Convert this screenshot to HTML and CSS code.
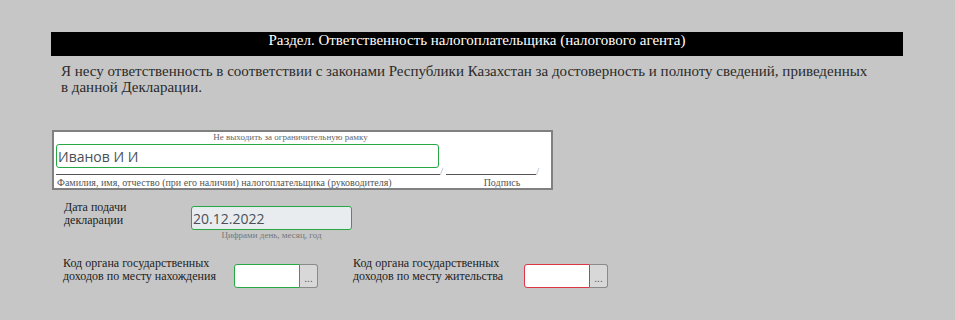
FILE: index.html
```html
<html>
<head>
  <title>Ответственность налогоплательщика</title>
  <link rel="stylesheet" href="styles.css">
</head>
<body>
  <div class="page">
    <div class="section-title">Раздел. Ответственность налогоплательщика (налогового агента)</div>
    <p class="statement">Я несу ответственность в соответствии с законами Республики Казахстан за достоверность и полноту сведений, приведенных в данной Декларации.</p>

    <div class="sign-box">
      <div class="frame-note">Не выходить за ограничительную рамку</div>
      <div class="fio-row">
        <div class="fio-cell"><input class="field ok fio" type="text" value="Иванов И И"></div>
        <span class="slash">/</span>
        <div class="sign-cell"></div>
        <span class="slash">/</span>
      </div>
      <div class="caption-row">
        <span class="fio-caption">Фамилия, имя, отчество (при его наличии) налогоплательщика (руководителя)</span>
        <span class="sign-caption">Подпись</span>
      </div>
    </div>

    <div class="date-row">
      <div class="label">Дата подачи<br>декларации</div>
      <div class="date-wrap">
        <input class="field ok date" type="text" value="20.12.2022" readonly>
        <div class="hint">Цифрами день, месяц, год</div>
      </div>
    </div>

    <div class="code-row">
      <div class="code-group">
        <div class="label">Код органа государственных<br>доходов по месту нахождения</div>
        <div class="picker">
          <input class="field ok code" type="text">
          <button class="dots">...</button>
        </div>
      </div>
      <div class="code-group">
        <div class="label">Код органа государственных<br>доходов по месту жительства</div>
        <div class="picker">
          <input class="field bad code" type="text">
          <button class="dots">...</button>
        </div>
      </div>
    </div>
  </div>
</body>
</html>
```

FILE: styles.css
```css
body { margin: 0; background: #c6c6c6; font-family: "Liberation Serif", "Tinos", "DejaVu Serif", serif; color: #222; }
.page { padding: 32px 0 0 51px; width: 852px; }
.section-title { background: #000; color: #fff; font-size: 15px; height: 24px; line-height: 17px;
  text-align: center; }
.statement { margin: 7px 0 0 10px; width: 810px; font-size: 15px; line-height: 16px; color: #2a2a2a; }

.sign-box { margin: 35px 0 0 1px; width: 495px; height: 56px; background: #fff; border: 2px solid #808080;
  padding: 0 0 0 2px; }
.frame-note { font-size: 9px; color: #666; text-align: center; line-height: 10px; margin-left: -26px; }
.fio-row { display: flex; align-items: flex-end; margin-top: 2px; }
.fio-cell { width: 384px; border-bottom: 1px solid #555; padding-bottom: 6px; }
.sign-cell { width: 90px; height: 30px; border-bottom: 1px solid #555; margin-left: 5px; }
.slash { font-size: 11px; color: #8aa6c0; line-height: 9px; width: 1px; margin-bottom: -1px; }
.caption-row { display: flex; font-size: 10px; color: #555; line-height: 10px; margin-top: 3px; }
.fio-caption { width: 420px; padding-left: 1px; }
.sign-caption { width: 50px; text-align: center; }

.field { font-family: "Open Sans", "Noto Sans", sans-serif; font-size: 14px; color: #495057; height: 24px;
  box-sizing: border-box; border: 1px solid #28a745; border-radius: 3px; padding: 0 1px; outline: none;
  background: #fff; }
.field.bad { border-color: #dc3545; }
.fio { width: 383px; display: block; }
.date { width: 161px; background: #e9ecef; }
.code { width: 66px; border-radius: 3px 0 0 3px; }

.label { font-size: 12px; line-height: 13px; }
.date-row { display: flex; margin: 11px 0 0 13px; }
.date-row .label { width: 127px; padding-top: 0; }
.date-wrap { padding-top: 5px; }
.hint { font-size: 9px; color: #777; text-align: center; line-height: 11px; }

.code-row { display: flex; margin: 16px 0 0 12px; }
.code-group { display: flex; }
.code-group + .code-group { margin-left: 35px; }
.code-group .label { width: 171px; padding-top: 0; }
.picker { display: flex; padding-top: 7px; }
.dots { width: 18px; height: 24px; box-sizing: border-box; padding: 4px 0 0; font-size: 10px; color: #555;
  background: #d8d8d8; border: 1px solid #8a8a8a; border-left: none; border-radius: 0 3px 3px 0; }
```
